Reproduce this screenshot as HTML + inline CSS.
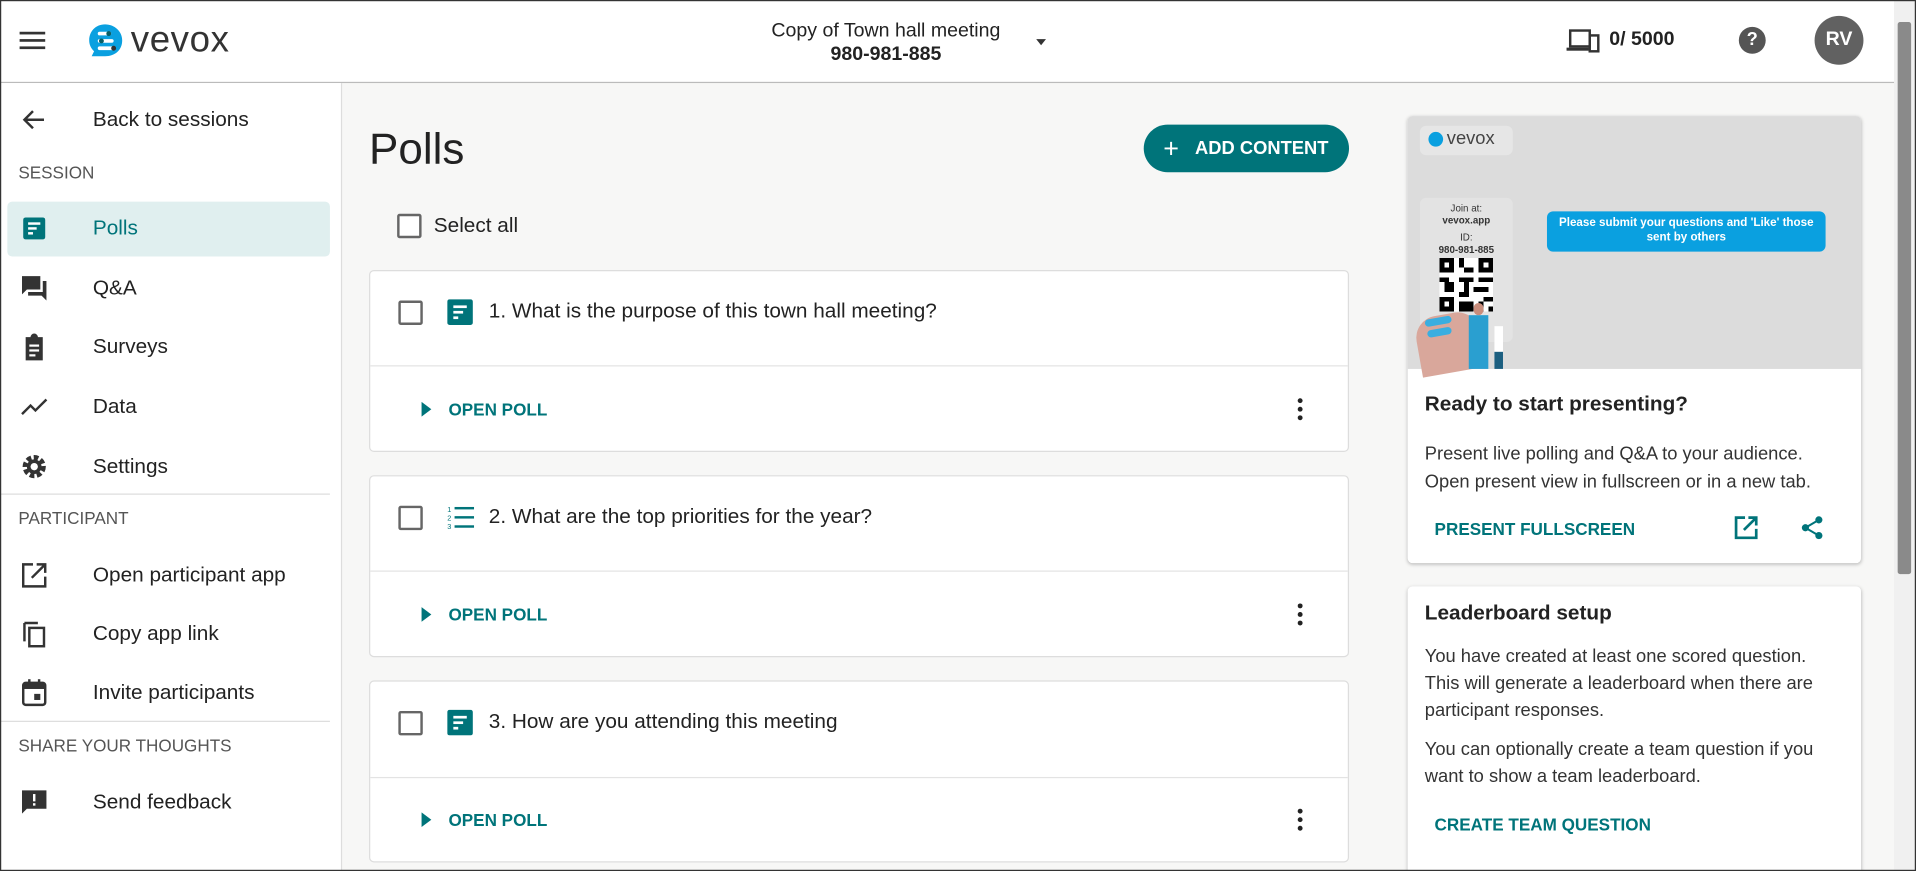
<!DOCTYPE html>
<html><head><meta charset="utf-8"><style>
html,body{margin:0;padding:0;width:1916px;height:871px;overflow:hidden;background:#fff}
#w{position:absolute;left:0;top:0;width:1568px;height:713px;transform:scale(1.22194,1.2216);transform-origin:0 0;font-family:"Liberation Sans",Arial,sans-serif;color:#222;background:#f7f7f6;overflow:hidden}
.a{position:absolute}
.hdr{left:0;top:0;width:1568px;height:68px;background:#fff;border-bottom:1px solid #bbb;box-sizing:border-box}
.side{left:0;top:68px;width:280px;height:645px;background:#fff;border-right:1px solid #ddd;box-sizing:border-box}
.it{position:absolute;left:76px;font-size:17px;color:#222;transform:translateY(-50%)}
.lbl{position:absolute;left:15px;font-size:14px;color:#555;transform:translateY(-50%)}
.ic{position:absolute;left:16px;width:24px;height:24px;transform:translateY(-50%)}
.div{position:absolute;left:0;width:270px;border-top:1px solid #ddd}
.card{position:absolute;left:302px;width:802px;height:149px;background:#fff;border:1px solid #ddd;border-radius:4px;box-sizing:border-box}
.cb{position:absolute;width:16px;height:16px;border:2px solid #666;border-radius:2px;background:#fff}
.q{position:absolute;left:97px;top:33px;font-size:17px;transform:translateY(-50%)}
.op{position:absolute;left:64px;top:113px;font-size:14px;font-weight:bold;color:#00747a;transform:translateY(-50%)}
.tri{position:absolute;left:42px;top:107px;width:0;height:0;border-left:8px solid #00747a;border-top:6px solid transparent;border-bottom:6px solid transparent}
.keb{position:absolute;left:759px;top:104px;width:4px}
.keb i{display:block;width:4px;height:4px;border-radius:2px;background:#222;margin-bottom:3px}
.teal{color:#00747a;font-weight:bold}
</style></head><body><div id="w">
<div class="a hdr">
 <svg class="a" style="left:16px;top:24px" width="22" height="18"><rect y="2" width="21" height="2.2" fill="#333"/><rect y="8" width="21" height="2.2" fill="#333"/><rect y="14" width="21" height="2.2" fill="#333"/></svg>
 <svg class="a" style="left:72px;top:18px" width="30" height="32" viewBox="0 0 30 32"><path d="M14 2C22 2 28 8 28 15C28 23 22 28 14 28H3L5 24C2 21 1 18 1 15C1 8 6 2 14 2Z" fill="#0aa0e0"/><rect x="8" y="8" width="11" height="3" rx="1.5" fill="#fff"/><rect x="8" y="14" width="13" height="3" rx="1.5" fill="#fff"/><rect x="8" y="20" width="14" height="3" rx="1.5" fill="#fff"/><circle cx="17" cy="9.5" r="2" fill="#0b5f66"/><circle cx="11" cy="15.5" r="2" fill="#0b5f66"/><circle cx="21" cy="21.5" r="2" fill="#333"/></svg>
 <div class="a" style="left:107px;top:16px;font-size:30px;color:#333;letter-spacing:0.5px">vevox</div>
 <div class="a" style="left:600px;top:16px;width:250px;text-align:center;font-size:16px;line-height:19px">Copy of Town hall meeting<br><b>980-981-885</b></div>
 <div class="a" style="left:848px;top:32px;border-top:5px solid #333;border-left:4px solid transparent;border-right:4px solid transparent"></div>
 <svg class="a" style="left:1282px;top:23px" width="28" height="22" viewBox="0 0 28 22"><rect x="3" y="2" width="16" height="13" fill="none" stroke="#333" stroke-width="2"/><rect x="0" y="16" width="18" height="2.5" fill="#333"/><rect x="19" y="6" width="7" height="13" fill="none" stroke="#333" stroke-width="2"/></svg>
 <div class="a" style="left:1317px;top:24px;font-size:16px;font-weight:bold;color:#222">0/ 5000</div>
 <div class="a" style="left:1423px;top:22px;width:22px;height:22px;border-radius:50%;background:#555;color:#fff;font-weight:bold;font-size:15px;text-align:center;line-height:22px">?</div>
 <div class="a" style="left:1485px;top:13px;width:40px;height:40px;border-radius:50%;background:#616161;color:#fff;font-size:16px;font-weight:bold;text-align:center;line-height:40px">RV</div>
</div>
<div class="a side">
 <svg class="ic" style="top:30px" viewBox="0 0 24 24"><path d="M20 12H5M11 5l-7 7 7 7" fill="none" stroke="#333" stroke-width="2"/></svg>
 <div class="it" style="top:30px">Back to sessions</div>
 <div class="lbl" style="top:73px">SESSION</div>
 <div class="a" style="left:6px;top:97px;width:264px;height:45px;background:#e0efef;border-radius:4px"></div>
 <svg class="ic" style="top:119px" viewBox="0 0 24 24"><rect x="3" y="3" width="18" height="18" rx="2" fill="#00747a"/><rect x="7" y="7" width="10" height="2" fill="#fff"/><rect x="7" y="11" width="7" height="2" fill="#fff"/><rect x="7" y="15" width="4" height="2" fill="#fff"/></svg>
 <div class="it" style="top:119px;color:#00747a">Polls</div>
 <svg class="ic" style="top:168px" viewBox="0 0 24 24"><path d="M2 2h15v11H6l-4 4z" fill="#333"/><path d="M19 6h3v16l-4-4H7v-3h12z" fill="#333"/></svg>
 <div class="it" style="top:168px">Q&amp;A</div>
 <svg class="ic" style="top:216px" viewBox="0 0 24 24"><path d="M5 4h4a3 3 0 0 1 6 0h4v19H5z" fill="#333"/><rect x="8" y="10" width="8" height="1.8" fill="#fff"/><rect x="8" y="14" width="8" height="1.8" fill="#fff"/><rect x="8" y="18" width="5" height="1.8" fill="#fff"/></svg>
 <div class="it" style="top:216px">Surveys</div>
 <svg class="ic" style="top:265px" viewBox="0 0 24 24"><path d="M2 18l7-7 4 4 9-9" fill="none" stroke="#333" stroke-width="2"/></svg>
 <div class="it" style="top:265px">Data</div>
 <svg class="ic" style="top:314px" viewBox="0 0 24 24"><circle cx="12" cy="12" r="7" fill="none" stroke="#333" stroke-width="5" stroke-dasharray="3.5 1.9"/><circle cx="12" cy="12" r="6" fill="#333"/><circle cx="12" cy="12" r="3" fill="#fff"/></svg>
 <div class="it" style="top:314px">Settings</div>
 <div class="div" style="top:336px"></div>
 <div class="lbl" style="top:356px">PARTICIPANT</div>
 <svg class="ic" style="top:403px" viewBox="0 0 24 24"><path d="M11 3H3v18h18v-8M14 3h7v7M21 3L10 14" fill="none" stroke="#333" stroke-width="2"/></svg>
 <div class="it" style="top:403px">Open participant app</div>
 <svg class="ic" style="top:451px" viewBox="0 0 24 24"><path d="M4 3v15M4 3h11" fill="none" stroke="#333" stroke-width="2"/><rect x="8" y="7" width="12" height="15" fill="none" stroke="#333" stroke-width="2"/></svg>
 <div class="it" style="top:451px">Copy app link</div>
 <svg class="ic" style="top:499px" viewBox="0 0 24 24"><rect x="3" y="4" width="18" height="18" rx="2" fill="none" stroke="#333" stroke-width="2"/><rect x="3" y="4" width="18" height="5" fill="#333"/><rect x="7" y="1" width="2" height="4" fill="#333"/><rect x="15" y="1" width="2" height="4" fill="#333"/><rect x="12" y="13" width="5" height="5" fill="#333"/></svg>
 <div class="it" style="top:499px">Invite participants</div>
 <div class="div" style="top:522px"></div>
 <div class="lbl" style="top:542px">SHARE YOUR THOUGHTS</div>
 <svg class="ic" style="top:589px" viewBox="0 0 24 24"><path d="M2 2h20v15H6l-4 4z" fill="#333"/><rect x="11" y="5" width="2" height="6" fill="#fff"/><rect x="11" y="12.5" width="2" height="2" fill="#fff"/></svg>
 <div class="it" style="top:589px">Send feedback</div>
</div>
<div class="a" style="left:302px;top:101px;font-size:36px;color:#222">Polls</div>
<div class="a" style="left:936px;top:102px;width:168px;height:39px;border-radius:20px;background:#00747a;color:#fff;font-size:15px;font-weight:bold;line-height:39px"><span style="position:absolute;left:16px;font-size:22px;font-weight:normal">+</span><span style="position:absolute;left:42px">ADD CONTENT</span></div>
<div class="cb" style="left:325px;top:175px"></div>
<div class="a" style="left:355px;top:175px;font-size:17px">Select all</div>

<div class="card" style="top:221px"><div class="cb" style="left:23px;top:24px"></div>
<svg class="a" style="left:63px;top:23px" width="21" height="21" viewBox="0 0 21 21"><rect width="21" height="21" rx="2" fill="#00747a"/><rect x="5" y="5" width="11" height="2.2" fill="#fff"/><rect x="5" y="9.5" width="8" height="2.2" fill="#fff"/><rect x="5" y="14" width="4" height="2.2" fill="#fff"/></svg>
<div class="q">1. What is the purpose of this town hall meeting?</div>
<div class="a" style="left:0;top:77px;width:800px;border-top:1px solid #e3e3e3"></div>
<div class="tri"></div><div class="op">OPEN POLL</div><div class="keb"><i></i><i></i><i></i></div></div>

<div class="card" style="top:389px"><div class="cb" style="left:23px;top:24px"></div>
<svg class="a" style="left:63px;top:23px" width="22" height="21" viewBox="0 0 22 21"><rect x="6" y="2" width="16" height="2" fill="#00747a"/><rect x="6" y="9.5" width="16" height="2" fill="#00747a"/><rect x="6" y="17" width="16" height="2" fill="#00747a"/><text x="0" y="6" font-size="6" fill="#00747a" font-family="Liberation Sans">1</text><text x="0" y="13" font-size="6" fill="#00747a" font-family="Liberation Sans">2</text><text x="0" y="20" font-size="6" fill="#00747a" font-family="Liberation Sans">3</text></svg>
<div class="q">2. What are the top priorities for the year?</div>
<div class="a" style="left:0;top:77px;width:800px;border-top:1px solid #e3e3e3"></div>
<div class="tri"></div><div class="op">OPEN POLL</div><div class="keb"><i></i><i></i><i></i></div></div>

<div class="card" style="top:557px"><div class="cb" style="left:23px;top:24px"></div>
<svg class="a" style="left:63px;top:23px" width="21" height="21" viewBox="0 0 21 21"><rect width="21" height="21" rx="2" fill="#00747a"/><rect x="5" y="5" width="11" height="2.2" fill="#fff"/><rect x="5" y="9.5" width="8" height="2.2" fill="#fff"/><rect x="5" y="14" width="4" height="2.2" fill="#fff"/></svg>
<div class="q">3. How are you attending this meeting</div>
<div class="a" style="left:0;top:78px;width:800px;border-top:1px solid #e3e3e3"></div>
<div class="tri"></div><div class="op">OPEN POLL</div><div class="keb"><i></i><i></i><i></i></div></div>

<div class="a" style="left:1152px;top:95px;width:371px;height:366px;background:#fff;border-radius:4px;box-shadow:0 1px 3px rgba(0,0,0,.25);overflow:hidden">
 <div class="a" style="left:0;top:0;width:371px;height:207px;background:#dcdcdc"></div>
 <div class="a" style="left:10px;top:8px;width:76px;height:24px;background:#e6e6e6;border-radius:5px"></div>
 <div class="a" style="left:17px;top:13px;width:12px;height:12px;border-radius:50%;background:#0aa0e0"></div>
 <div class="a" style="left:32px;top:10px;font-size:15px;color:#444">vevox</div>
 <div class="a" style="left:10px;top:67px;width:76px;height:118px;background:#e3e3e3;border-radius:5px;text-align:center;font-size:8px;color:#333;line-height:10px;padding-top:4px;box-sizing:border-box">Join at:<br><b>vevox.app</b><br><span style="display:block;height:4px"></span>ID:<br><b>980-981-885</b></div>
 <svg class="a" style="left:26px;top:116px" width="44" height="44" viewBox="0 0 11 11" shape-rendering="crispEdges"><rect width="11" height="11" fill="#fff"/><g fill="#000"><rect x="0" y="0" width="3" height="3"/><rect x="8" y="0" width="3" height="3"/><rect x="0" y="8" width="3" height="3"/><rect x="4" y="0" width="1" height="2"/><rect x="5" y="2" width="2" height="1"/><rect x="4" y="4" width="3" height="1"/><rect x="0" y="4" width="2" height="1"/><rect x="8" y="4" width="3" height="1"/><rect x="1" y="5" width="2" height="2"/><rect x="5" y="5" width="1" height="2"/><rect x="7" y="6" width="3" height="1"/><rect x="4" y="7" width="2" height="1"/><rect x="9" y="8" width="2" height="1"/><rect x="4" y="9" width="3" height="2"/><rect x="8" y="9" width="1" height="2"/><rect x="10" y="10" width="1" height="1"/></g><g fill="#fff"><rect x="1" y="1" width="1" height="1"/><rect x="9" y="1" width="1" height="1"/><rect x="1" y="9" width="1" height="1"/></g></svg>
 <div class="a" style="left:8px;top:162px;width:52px;height:48px;background:#d9a79b;border-radius:18px 18px 0 0;transform:rotate(-10deg)"></div>
 <div class="a" style="left:14px;top:165px;width:22px;height:6px;background:#3aaee0;border-radius:3px;transform:rotate(-10deg)"></div>
 <div class="a" style="left:16px;top:174px;width:20px;height:6px;background:#3aaee0;border-radius:3px;transform:rotate(-10deg)"></div>
 <div class="a" style="left:50px;top:163px;width:16px;height:44px;background:#2a9fd0"></div>
 <div class="a" style="left:54px;top:153px;width:8px;height:10px;background:#c98d7c;border-radius:4px"></div>
 <div class="a" style="left:71px;top:172px;width:7px;height:35px;background:#fff"></div>
 <div class="a" style="left:71px;top:193px;width:7px;height:14px;background:#1c5f80"></div>
 <div class="a" style="left:114px;top:78px;width:228px;height:33px;background:#0aa0e0;border-radius:5px;color:#fff;font-size:9.5px;text-align:center;line-height:12px;padding-top:4px;box-sizing:border-box;font-weight:bold">Please submit your questions and 'Like' those sent by others</div>
 <div class="a" style="left:14px;top:226px;font-size:17px;font-weight:bold;color:#222">Ready to start presenting?</div>
 <div class="a" style="left:14px;top:265px;font-size:15px;line-height:23px;color:#333">Present live polling and Q&amp;A to your audience.<br>Open present view in fullscreen or in a new tab.</div>
 <div class="a teal" style="left:22px;top:330px;font-size:14px">PRESENT FULLSCREEN</div>
 <svg class="a" style="left:266px;top:326px" width="22" height="22" viewBox="0 0 24 24"><path d="M11 3H3v18h18v-8M14 3h7v7M21 3L10 14" fill="none" stroke="#00747a" stroke-width="2.4"/></svg>
 <svg class="a" style="left:320px;top:326px" width="22" height="22" viewBox="0 0 24 24"><circle cx="18" cy="5" r="3.2" fill="#00747a"/><circle cx="6" cy="12" r="3.2" fill="#00747a"/><circle cx="18" cy="19" r="3.2" fill="#00747a"/><path d="M18 5L6 12l12 7" fill="none" stroke="#00747a" stroke-width="1.8"/></svg>
</div>
<div class="a" style="left:1152px;top:480px;width:371px;height:260px;background:#fff;border-radius:4px;box-shadow:0 1px 3px rgba(0,0,0,.25)">
 <div class="a" style="left:14px;top:12px;font-size:17px;font-weight:bold">Leaderboard setup</div>
 <div class="a" style="left:14px;top:47px;font-size:15px;line-height:22px;color:#333;width:330px">You have created at least one scored question. This will generate a leaderboard when there are participant responses.</div>
 <div class="a" style="left:14px;top:123px;font-size:15px;line-height:22px;color:#333;width:330px">You can optionally create a team question if you want to show a team leaderboard.</div>
 <div class="a teal" style="left:22px;top:187px;font-size:14px">CREATE TEAM QUESTION</div>
</div>
<div class="a" style="left:1550px;top:0;width:18px;height:713px;background:#f0f0f0"></div>
<div class="a" style="left:1553px;top:18px;width:11px;height:452px;background:#8a8a8a;border-radius:2px"></div>
<div class="a" style="left:0;top:0;width:1566px;height:711px;border:1px solid #333"></div>
</div></body></html>
